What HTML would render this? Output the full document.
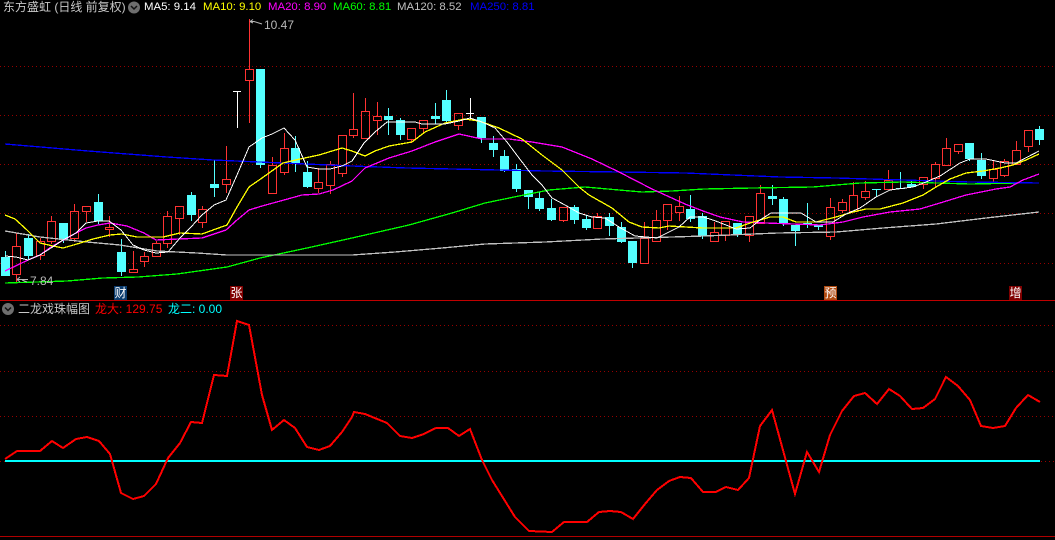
<!DOCTYPE html>
<html><head><meta charset="utf-8"><style>
html,body{margin:0;padding:0;background:#000;width:1055px;height:540px;overflow:hidden}
#w{position:relative;width:1055px;height:540px;background:#000;overflow:hidden;font-family:"Liberation Sans","Noto Sans CJK SC",sans-serif}
svg{position:absolute;left:0;top:0}
.t{position:absolute;white-space:nowrap;font-size:12px;line-height:14px}
.h{font-size:11.4px}
.m{position:absolute;width:13px;height:14px;color:#fff;font-size:12px;line-height:14px;text-align:center;overflow:hidden}
</style></head><body><div id="w">
<svg width="1055" height="540" viewBox="0 0 1055 540">
<g stroke="#960000" stroke-width="1" stroke-dasharray="1 3" fill="none" shape-rendering="crispEdges">
<path d="M0 66.5H1055M0 115.5H1055M0 164.5H1055M0 213.5H1055M0 263.5H1055M0 325.5H1055M0 371.5H1055M0 416.5H1055M0 461.5H5M1041 461.5H1055"/>
</g>
<path d="M0 300.5H1055" stroke="#c00000" stroke-width="1" shape-rendering="crispEdges"/>
<path d="M0 536.5H1055" stroke="#b00000" stroke-width="1" shape-rendering="crispEdges"/>
<!-- red candles -->
<path fill="none" stroke="#ff3232" stroke-width="1" shape-rendering="crispEdges" d="
M16.5 233V246M16.5 274V282M12.5 246.5h8v28h-8z
M40.5 238V241M40.5 255V260M36.5 241.5h8v14h-8z
M51.5 216V221M51.5 241V244M47.5 221.5h8v20h-8z
M74.5 204V211M74.5 238V242M70.5 211.5h8v27h-8z
M86.5 211V222M82.5 206.5h8v5h-8z
M109.5 216V227M109.5 230V237M105.5 227.5h8v2h-8z
M133.5 251V269M129.5 269.5h8v3h-8z
M144.5 252V256M144.5 261V267M140.5 256.5h8v5h-8z
M156.5 241V243M152.5 243.5h8v13h-8z
M167.5 211V216M167.5 243V248M163.5 216.5h8v27h-8z
M179.5 218V235M175.5 206.5h8v12h-8z
M202.5 206V209M202.5 222V228M198.5 209.5h8v13h-8z
M226.5 146V179M226.5 184V193M222.5 179.5h8v5h-8z
M249.5 19V69M249.5 80V123M245.5 69.5h8v11h-8z
M272.5 157V165M268.5 165.5h8v28h-8z
M284.5 133V148M284.5 172V175M280.5 148.5h8v24h-8z
M318.5 168V182M318.5 188V193M314.5 182.5h8v6h-8z
M330.5 161V164M330.5 185V194M326.5 164.5h8v21h-8z
M342.5 173V177M338.5 135.5h8v38h-8z
M353.5 93V129M353.5 135V138M349.5 129.5h8v6h-8z
M365.5 98V111M361.5 111.5h8v27h-8z
M377.5 102V116M377.5 120V135M373.5 116.5h8v4h-8z
M411.5 139V143M407.5 128.5h8v11h-8z
M423.5 128V134M419.5 120.5h8v8h-8z
M458.5 125V130M454.5 113.5h8v12h-8z
M563.5 220V222M559.5 207.5h8v13h-8z
M597.5 213V216M593.5 216.5h8v12h-8z
M644.5 222V238M640.5 238.5h8v25h-8z
M656.5 210V220M652.5 220.5h8v21h-8z
M667.5 220V230M663.5 204.5h8v16h-8z
M679.5 196V206M679.5 212V221M675.5 206.5h8v6h-8z
M714.5 222V232M710.5 232.5h8v9h-8z
M725.5 235V241M721.5 221.5h8v14h-8z
M749.5 235V242M745.5 216.5h8v19h-8z
M760.5 185V193M756.5 193.5h8v30h-8z
M830.5 198V207M830.5 236V240M826.5 207.5h8v29h-8z
M842.5 199V202M842.5 210V213M838.5 202.5h8v8h-8z
M853.5 182V195M849.5 195.5h8v16h-8z
M865.5 181V191M865.5 197V200M861.5 191.5h8v6h-8z
M888.5 170V180M884.5 180.5h8v9h-8z
M923.5 184V189M919.5 177.5h8v7h-8z
M935.5 162V164M935.5 178V188M931.5 164.5h8v14h-8z
M946.5 138V148M942.5 148.5h8v17h-8z
M958.5 151V154M954.5 144.5h8v7h-8z
M993.5 160V169M993.5 178V182M989.5 169.5h8v9h-8z
M1004.5 159V161M1004.5 175V177M1000.5 161.5h8v14h-8z
M1016.5 141V150M1012.5 150.5h8v14h-8z
M1028.5 146V152M1024.5 130.5h8v16h-8z"/>
<!-- cyan wicks -->
<path fill="none" stroke="#54ffff" stroke-width="1" shape-rendering="crispEdges" d="
M5.5 251V276M28.5 234V260M63.5 223V243M98.5 194V224M121.5 239V276M191.5 192V221M214.5 160V197M260.5 69V168M295.5 136V172M307.5 161V188M388.5 108V135M400.5 118V140M435.5 103V124M446.5 90V124M481.5 117V143M493.5 136V157M504.5 150V172M516.5 164V192M528.5 190V209M539.5 192V211M551.5 199V221M574.5 205V224M586.5 216V230M609.5 213V236M621.5 222V243M632.5 241V268M690.5 195V222M702.5 213V239M737.5 223V237M772.5 185V205M783.5 197V226M795.5 225V246M807.5 203V228M818.5 225V230M876.5 189V197M900.5 172V189M911.5 181V187M969.5 143V161M981.5 153V179M1039.5 126V145M872 189.5H881M896 188.5H905M803 223.5H812"/>
<!-- cyan bodies -->
<path fill="#54ffff" shape-rendering="crispEdges" d="
M1 257h9v19h-9zM24 238h9v18h-9zM59 223h9v17h-9zM94 202h9v19h-9zM117 252h9v20h-9zM187 195h9v20h-9zM210 184h9v4h-9zM256 69h9v96h-9zM291 148h9v15h-9zM303 172h9v15h-9zM384 116h9v4h-9zM396 120h9v15h-9zM431 116h9v3h-9zM442 100h9v21h-9zM477 117h9v21h-9zM489 143h9v7h-9zM500 156h9v15h-9zM512 169h9v20h-9zM524 190h9v7h-9zM535 198h9v11h-9zM547 208h9v12h-9zM570 207h9v13h-9zM582 219h9v9h-9zM605 217h9v9h-9zM617 227h9v15h-9zM628 241h9v22h-9zM686 209h9v10h-9zM698 216h9v20h-9zM733 223h9v11h-9zM768 196h9v3h-9zM779 199h9v25h-9zM791 225h9v6h-9zM814 225h9v2h-9zM907 184h9v3h-9zM965 143h9v16h-9zM977 160h9v16h-9zM1035 129h9v11h-9z"/>
<!-- white doji -->
<path fill="none" stroke="#fff" stroke-width="1" shape-rendering="crispEdges" d="M237.5 91V128M233 91.5H241M470.5 98V120M466 113.5H474"/>
<!-- MA lines -->
<g fill="none" shape-rendering="crispEdges">
<polyline stroke="#00ff00" stroke-width="1.3" points="5,283 67,281 103,278 138,277 177,274 227,267 260,258 307,248 352,238 409,225 452,213 485,203 519,196 549,190 585,187 619,190 642,192 672,191 704,189 753,188 813,187 860,183 903,182 970,184 1023,183"/>
<polyline stroke="#0000ff" stroke-width="1.3" points="5,144 88,151 167,157 213,160 352,166 407,168 452,169 545,171 619,172 685,173 780,177 836,178 903,180 970,182 1039,183"/>
<polyline stroke="#c0c0c0" stroke-width="1.3" points="5,231 40,237 87,242 120,245 157,251 197,253 227,255 352,255 395,252 442,248 485,244 545,242 602,239 672,237 704,236 778,233 836,232 883,228 936,224 986,218 1039,212"/>
<polyline stroke="#ff00ff" stroke-width="1.3" points="5,271 28,260 40,255 51,247 76,233 86,228 98,225 110,223 127,226 144,233 156,240 179,239 202,238 226,230 237,220 249,210 262,206 284,200 302,195 319,194 333,190 352,181 365,168 389,158 412,151 435,142 459,134 482,139 509,139 532,142 562,147 592,159 619,172 652,189 685,204 703,211 720,217 743,222 766,223 820,225 843,222 863,217 890,212 920,209 940,203 966,195 996,189 1010,187 1023,180 1039,174"/>
<polyline stroke="#ffff00" stroke-width="1.3" points="5,215 15,219 27,230 40,243 53,246 63,248 77,244 93,239 110,235 122,234 137,237 163,237 180,233 202,234 213,230 227,225 237,207 249,187 262,178 283,163 300,159 319,155 342,148 352,151 365,156 375,151 389,146 412,142 425,132 445,123 465,119 479,121 499,128 522,139 542,155 562,170 579,187 589,195 612,208 629,222 642,227 659,228 669,226 703,228 736,228 750,223 770,217 783,217 796,222 816,222 836,217 853,212 866,209 880,209 903,203 923,195 936,187 950,179 966,173 983,171 1000,168 1013,165 1026,160 1039,154"/>
<polyline stroke="#ffffff" stroke-width="1" points="5,256 16,257 28,260 40,255 51,248 63,240 76,233 86,223 98,221 109,221 121,230 133,245 144,250 156,253 168,252 180,238 191,227 202,215 214,205 226,200 237,175 249,147 262,138 272,134 284,128 295,140 307,167 319,169 330,169 342,166 352,161 364,143 375,132 387,122 415,122 422,124 445,124 459,121 470,118 482,122 495,128 507,142 519,158 532,175 542,185 552,198 565,205 579,213 592,217 605,218 619,227 635,236 657,238 667,233 679,227 690,217 703,217 713,220 726,225 736,229 750,228 760,220 771,213 801,213 816,222 833,222 846,214 860,208 876,197 890,190 913,187 926,182 940,176 960,163 970,159 986,159 1005,163 1016,163 1039,151"/>
</g>
<!-- annotations -->
<path fill="none" stroke="#b8b8b8" stroke-width="1" d="M250 21.5L253 19.5M250 21.5L253 23M250 21.5H254L262 24M17 279.5H28M17 279.5L20 277M17 279.5L20 282M22 280L27 282"/>
<!-- lower panel -->
<path d="M5 461H1040" stroke="#00ffff" stroke-width="2" fill="none" shape-rendering="crispEdges"/>
<polyline fill="none" stroke="#ff0000" stroke-width="2" shape-rendering="crispEdges" points="5,459 17,451 40,451 52,441 63,448 76,439 87,437 99,441 110,454 121,493 133,499 144,496 156,484 168,458 180,443 191,422 202,423 214,375 227,376 237,321 249,325 262,395 272,430 284,420 295,428 307,447 319,450 330,446 342,432 352,417 354,412 365,414 387,423 400,436 412,438 424,434 436,428 448,428 459,436 470,429 482,460 492,480 515,517 529,531 552,532 564,522 587,522 599,512 610,511 621,512 633,519 645,504 657,490 669,481 680,477 691,478 703,492 716,492 726,487 738,490 749,478 760,426 772,410 795,494 807,452 819,472 830,435 842,411 854,396 865,393 877,404 889,389 900,396 912,409 923,408 935,399 946,377 958,386 970,400 981,426 993,428 1005,426 1016,408 1028,395 1040,402"/>
<!-- circles -->
<circle cx="134" cy="7.5" r="6" fill="#6e6e6e"/>
<path d="M131 6l3 3 3-3" fill="none" stroke="#111" stroke-width="1.5"/>
<circle cx="8" cy="309" r="6" fill="#6e6e6e"/>
<path d="M5 307.5l3 3 3-3" fill="none" stroke="#111" stroke-width="1.5"/>
</svg>
<span class="t" style="left:3px;top:0;color:#c8c8c8">东方盛虹 (日线 前复权)</span>
<span class="t h" style="left:144px;top:0;color:#fff">MA5: 9.14</span>
<span class="t h" style="left:203px;top:0;color:#ff0">MA10: 9.10</span>
<span class="t h" style="left:268px;top:0;color:#f0f">MA20: 8.90</span>
<span class="t h" style="left:333px;top:0;color:#0f0">MA60: 8.81</span>
<span class="t h" style="left:397px;top:0;color:#c0c0c0">MA120: 8.52</span>
<span class="t h" style="left:470px;top:0;color:#00f">MA250: 8.81</span>
<span class="t" style="left:264px;top:18px;color:#b8b8b8">10.47</span>
<span class="t" style="left:30px;top:274px;color:#b8b8b8">7.84</span>
<span class="m" style="left:114px;top:286px;background:#0b3c6e">财</span>
<span class="m" style="left:230px;top:286px;background:#800000">张</span>
<span class="m" style="left:824px;top:286px;background:#b04a10">预</span>
<span class="m" style="left:1009px;top:286px;background:#800000">增</span>
<span class="t" style="left:18px;top:302px;color:#c8c8c8">二龙戏珠幅图</span>
<span class="t" style="left:95px;top:302px;color:#f00">龙大: 129.75</span>
<span class="t" style="left:168px;top:302px;color:#0ff">龙二: 0.00</span>
</div></body></html>
